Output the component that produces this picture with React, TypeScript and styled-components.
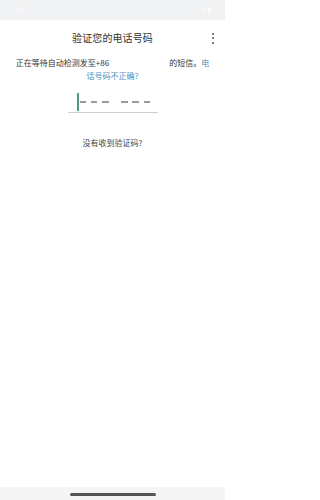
import React from "react";
import styled, { createGlobalStyle } from "styled-components";

const Global = createGlobalStyle`
  html, body { margin: 0; padding: 0; background: #ffffff; }
  body { font-family: "Noto Sans CJK SC", "Noto Sans", sans-serif; }
  #root { height: 500px; }
`;

const Screen = styled.div`
  width: 225px;
  height: 500px;
  display: flex;
  flex-direction: column;
  background: #ffffff;
  overflow: hidden;
`;

const StatusBar = styled.div`
  height: 20px;
  flex: none;
  background: #f1f2f4;
  display: flex;
  align-items: center;
  justify-content: space-between;
  padding: 0 14px;
  color: #fbfbfc;
  font-size: 7px;
  font-family: "Roboto", sans-serif;
`;

const Header = styled.header`
  height: 36px;
  flex: none;
  display: grid;
  grid-template-columns: 1fr auto 1fr;
  align-items: center;
  padding: 0 10px;
`;

const Title = styled.h1`
  margin: 0;
  grid-column: 2;
  font-size: 10px;
  font-weight: 400;
  color: #333333;
  line-height: 14px;
  letter-spacing: 0.1px;
`;

const Kebab = styled.div`
  grid-column: 3;
  justify-self: end;
  display: flex;
  flex-direction: column;
  gap: 2.5px;
  padding-right: 1px;
`;

const Dot = styled.span`
  width: 2px;
  height: 2px;
  border-radius: 50%;
  background: #555555;
`;

const Message = styled.p`
  margin: 0;
  padding: 0 14px;
  text-align: center;
  font-size: 8px;
  line-height: 13px;
  color: #333333;
`;

const Hidden = styled.span`
  display: inline-block;
  width: 60px;
`;

const Link = styled.span`
  color: #4a8fc4;
`;

const CodeField = styled.div`
  margin: 10px auto 0;
  width: 90px;
  height: 21px;
  box-sizing: border-box;
  border-bottom: 1px solid #cfcfcf;
  display: flex;
  align-items: center;
  padding-left: 9px;
`;

const Caret = styled.span`
  display: block;
  flex: none;
  width: 2px;
  height: 18px;
  background: #4e9a7c;
  margin-right: 1px;
`;

const Group = styled.div`
  display: flex;
  gap: 4.8px;
  margin-right: 12.5px;
`;

const Dash = styled.span`
  width: 6.5px;
  height: 1.3px;
  background: #9a9a9a;
`;

const Resend = styled.p`
  margin: 23px 0 0;
  text-align: center;
  font-size: 8px;
  line-height: 13px;
  color: #444444;
`;

const Spacer = styled.div`
  flex: 1;
`;

const NavArea = styled.div`
  height: 13px;
  flex: none;
  background: #f5f5f6;
  display: flex;
  justify-content: center;
  padding-top: 6px;
  box-sizing: border-box;
`;

const HomeBar = styled.span`
  width: 86px;
  height: 2.5px;
  border-radius: 2px;
  background: #555555;
`;

export default function App() {
  return (
    <Screen>
      <Global />
      <StatusBar>
        <span>9:41</span>
        <span>● ▮</span>
      </StatusBar>
      <Header>
        <Title>验证您的电话号码</Title>
        <Kebab>
          <Dot />
          <Dot />
          <Dot />
        </Kebab>
      </Header>
      <Message>
        正在等待自动检测发至+86<Hidden />的短信。<Link>电</Link>
        <Link>话号码不正确?</Link>
      </Message>
      <CodeField>
        <Caret />
        <Group>
          <Dash />
          <Dash />
          <Dash />
        </Group>
        <Group>
          <Dash />
          <Dash />
          <Dash />
        </Group>
      </CodeField>
      <Resend>没有收到验证码?</Resend>
      <Spacer />
      <NavArea>
        <HomeBar />
      </NavArea>
    </Screen>
  );
}
